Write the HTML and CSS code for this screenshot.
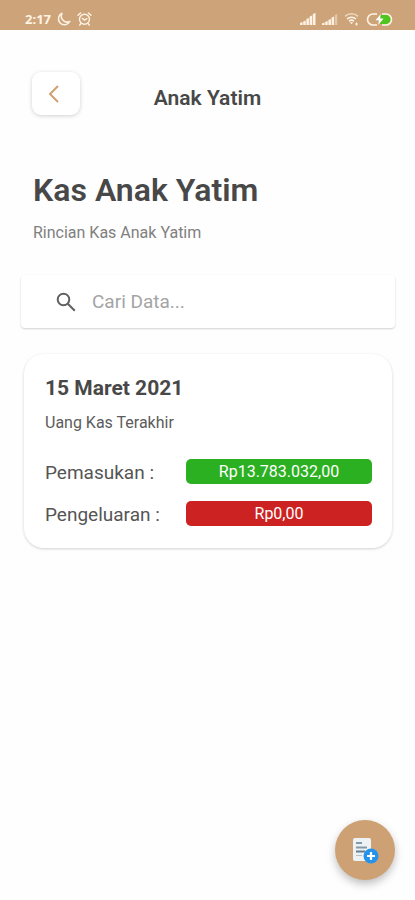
FILE: index.html
```html
<!DOCTYPE html>
<html lang="id">
<head>
<meta charset="utf-8">
<meta name="viewport" content="width=device-width, initial-scale=1">
<title>Kas Anak Yatim</title>
<link rel="stylesheet" href="styles.css">
</head>
<body>
<div class="statusbar">
  <div class="status-group">
    <span class="clock">2:17</span>
    <svg width="14" height="14" viewBox="0 0 14 14" fill="none" stroke="currentColor" stroke-width="1.5" stroke-linejoin="round"><path d="M5 1.3a6 6 0 1 0 7.8 8.2A6 6 0 0 1 5 1.3z"/></svg>
    <svg width="15" height="14" viewBox="0 0 15 14" fill="none" stroke="currentColor" stroke-width="1.4" stroke-linecap="round"><circle cx="7.5" cy="7.3" r="5"/><path d="M1 3.2 3.6 1M14 3.2 11.4 1M5.4 6.4l2.1 1.8 2.3-1.6M3.7 11.8l-1 1.3M11.3 11.8l1 1.3"/></svg>
  </div>
  <div class="status-group">
    <svg width="16" height="12" viewBox="0 0 16 12" fill="currentColor"><path d="M0 12V10l2.5-1v3zM3.2 12V8.4l2.5-1V12zM6.4 12V6l2.5-1v7zM9.6 12V3.4l2.5-1V12zM12.8 12V1L15.5 0v12z"/></svg>
    <svg width="16" height="12" viewBox="0 0 16 12" fill="currentColor"><path d="M0 12V10.5l2.5-1V12zM3.2 12V9l2.5-1v4zM6.4 12V7l2.5-1v6zM9.6 12V4.6l2.5-1V12z"/><path opacity=".45" d="M12.9 12V2l2.3-1v11z"/></svg>
    <svg class="wifi" width="16" height="14" viewBox="0 0 16 14" fill="none" stroke="currentColor" stroke-width="1.5"><path opacity=".65" d="M1 4.4a9.5 9.5 0 0 1 13 0"/><path d="M3 7a6.5 6.5 0 0 1 9 0M5 9.3a3.6 3.6 0 0 1 5 0"/><path d="m5.8 10.3 1.7 2 1.7-2z" fill="currentColor" stroke="none"/><path d="M12.5 10.500v3M11 12h3" stroke-width="1"/></svg>
    <svg width="27" height="13" viewBox="0 0 27 13"><path d="M14 2h6.5a4.500 4.500 0 0 1 0 9H14z" fill="#4fc51f"/><path d="M11 1H7a5.500 5.500 0 0 0 0 11h4M16 1h4a5.500 5.500 0 0 1 0 11h-4" fill="none" stroke="currentColor" stroke-width="1.600"/><path d="M14.800 1 9.500 7.300h3.500L12.200 12l5.400-6.400h-3.500z" fill="#fff"/></svg>
  </div>
</div>
<header class="topbar">
  <button class="back" type="button" aria-label="Kembali">
    <svg width="12" height="18" viewBox="0 0 12 18" fill="none" stroke="currentColor" stroke-width="2"><path d="M10 1 2 9l8 8"/></svg>
  </button>
  <div class="topbar-title">Anak Yatim</div>
</header>
<main>
  <h1>Kas Anak Yatim</h1>
  <p class="subtitle">Rincian Kas Anak Yatim</p>
  <label class="search">
    <svg width="20" height="20" viewBox="0 0 20 20" fill="none" stroke="currentColor" stroke-width="2"><circle cx="7.500" cy="7.500" r="5.800"/><path d="m11.800 11.800 7 7"/></svg>
    <input type="text" placeholder="Cari Data..." aria-label="Cari Data">
  </label>
  <section class="card">
    <h2>15 Maret 2021</h2>
    <p class="note">Uang Kas Terakhir</p>
    <dl>
      <dt>Pemasukan :</dt><dd class="income">Rp13.783.032,00</dd>
      <dt>Pengeluaran :</dt><dd class="expense">Rp0,00</dd>
    </dl>
  </section>
</main>
<button class="fab" type="button" aria-label="Tambah data">
  <svg width="28" height="28" viewBox="0 0 28 28"><rect x="2" y="2" width="18" height="23" rx="2" fill="#edf2f5"/><path d="M5 7h6M5 11.500h11" stroke="#8499a5" stroke-width="2"/><path d="M5 15.500h9" stroke="#657f8c" stroke-width="2"/><path d="M5 19.500h6" stroke="#b3c1c9" stroke-width="1"/><circle cx="20" cy="20" r="7.500" fill="#2592ec"/><path d="M20 16v8M16 20h8" stroke="#fff" stroke-width="2.200"/></svg>
</button>
</body>
</html>
```
FILE: styles.css
```css
* { box-sizing: border-box; }
body {
  margin: 0;
  min-height: 100vh;
  background: #fefefe;
  color: #484848;
  font-family: Roboto, "Liberation Sans", sans-serif;
}
h1, h2, p, dl, dd { margin: 0; }
svg { display: block; flex: none; }
.statusbar {
  display: flex;
  justify-content: space-between;
  height: 30px;
  padding: 8px 22px 0 25px;
  background: #cda47a;
  color: #fff3e4;
}
.status-group {
  display: flex;
  align-items: center;
  gap: 6px;
  height: 22px;
}
.clock {
  font-family: "Open Sans", Roboto, sans-serif;
  font-size: 13px;
  font-weight: 700;
}
.topbar {
  display: grid;
  grid-template-columns: 48px 1fr 48px;
  align-items: center;
  padding: 42px 32px 0;
}
.back {
  display: flex;
  align-items: center;
  justify-content: center;
  height: 43px;
  padding: 0 4px 0 0;
  border: 0;
  border-radius: 9px;
  background: #fff;
  color: #d0a070;
  box-shadow: 0 1px 4px rgba(0, 0, 0, .18);
}
.topbar-title {
  padding-top: 8px;
  text-align: center;
  font-size: 21px;
  line-height: 24px;
  font-weight: 600;
}
main { padding: 55px 20px 0 21px; }
h1 {
  padding-left: 12px;
  font-size: 32px;
  line-height: 40px;
  font-weight: 600;
}
.subtitle {
  padding: 13px 0 0 12px;
  font-size: 16px;
  line-height: 20px;
  color: #808080;
}
.search {
  display: flex;
  align-items: center;
  gap: 16px;
  height: 53px;
  margin-top: 32px;
  padding: 0 35px;
  border-radius: 4px;
  background: #fff;
  color: #606060;
  box-shadow: 0 1px 2px rgba(0, 0, 0, .18);
}
.search input {
  flex: 1;
  min-width: 0;
  padding: 0;
  border: 0;
  outline: 0;
  background: transparent;
  color: #484848;
  font: 19px/24px Roboto, "Liberation Sans", sans-serif;
}
.search input::placeholder { color: #a4a4a4; opacity: 1; }
.card {
  margin: 26px 3px 0;
  padding: 22px 20px 22px 21px;
  border-radius: 20px;
  background: #fff;
  box-shadow: 0 1px 3px rgba(0, 0, 0, .18);
}
h2 {
  font-size: 21px;
  line-height: 24px;
  font-weight: 700;
}
.note {
  padding-top: 13px;
  font-size: 16px;
  line-height: 20px;
  color: #5c5c5c;
}
dl {
  display: grid;
  grid-template-columns: 141px 1fr;
  align-items: center;
  row-gap: 17px;
  padding-top: 26px;
}
dt {
  padding-top: 2px;
  font-size: 19px;
  line-height: 23px;
  color: #555;
}
dd {
  border-radius: 5px;
  color: #fff;
  text-align: center;
  font-size: 16px;
  line-height: 25px;
}
.income { background: #2bb021; }
.expense { background: #cd2222; }
.fab {
  position: fixed;
  right: 20px;
  bottom: 20px;
  display: flex;
  align-items: center;
  justify-content: center;
  width: 60px;
  height: 60px;
  padding: 0;
  border: 0;
  border-radius: 50%;
  background: #cda173;
  box-shadow: 0 4px 8px rgba(0, 0, 0, .25);
}
```
